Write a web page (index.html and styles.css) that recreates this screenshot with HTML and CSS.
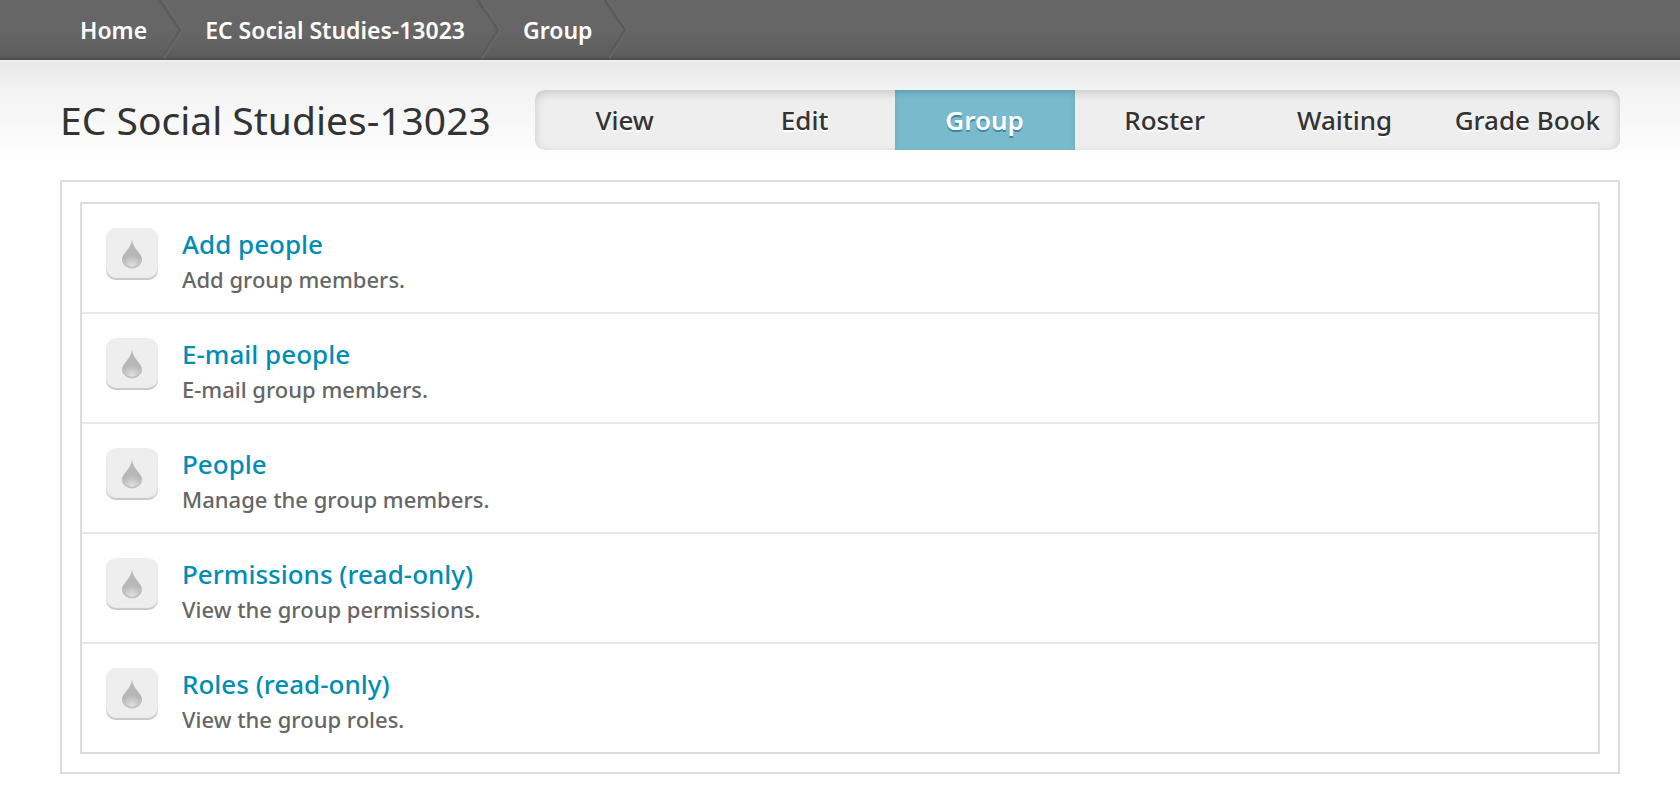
FILE: index.html
```html
<!DOCTYPE html>
<html lang="en">
<head>
<meta charset="utf-8">
<title>EC Social Studies-13023 | Group</title>
<link rel="stylesheet" href="styles.css">
</head>
<body>
<svg class="defs" width="0" height="0" aria-hidden="true">
  <defs>
    <radialGradient id="drop-fill" gradientUnits="userSpaceOnUse" cx="11" cy="27" r="12">
      <stop offset="0" stop-color="#e2e2e2"/>
      <stop offset="0.4" stop-color="#d0d0d0"/>
      <stop offset="0.9" stop-color="#b7b7b7"/>
    </radialGradient>
    <symbol id="drop" viewBox="0 0 22 30">
      <path d="M11 0.500C10.500 5 8.500 8 5.500 12C3 15.300 1 17.500 1 20.500A10 9 0 0 0 21 20.500C21 17.500 19 15.300 16.500 12C13.500 8 11.500 5 11 0.500Z" fill="url(#drop-fill)"/>
      <path d="M1.800 19.500A9.200 9 0 0 0 20.200 19.500" fill="none" stroke="#c2c2c2" stroke-width="1.500"/>
    </symbol>
    <symbol id="chevron" viewBox="0 0 24 60">
      <path d="M3 0L23 30L5 58" fill="none" stroke="#6b6b6b" stroke-width="2"/>
      <path d="M0 -1L21 30L3 58" fill="none" stroke="#5b5b5b" stroke-width="2.500"/>
    </symbol>
  </defs>
</svg>

<nav class="breadcrumb" aria-label="Breadcrumb">
  <ol class="crumbs">
    <li class="crumb"><a href="#">Home</a><svg class="chevron" aria-hidden="true"><use href="#chevron"/></svg></li>
    <li class="crumb"><a href="#">EC Social Studies-13023</a><svg class="chevron" aria-hidden="true"><use href="#chevron"/></svg></li>
    <li class="crumb"><a href="#">Group</a><svg class="chevron" aria-hidden="true"><use href="#chevron"/></svg></li>
  </ol>
</nav>

<header class="page-header">
  <h1 class="page-title">EC Social Studies-13023</h1>
  <nav class="tabs" aria-label="Tabs">
    <a class="tab" href="#">View</a>
    <a class="tab" href="#">Edit</a>
    <a class="tab tab-active" href="#" aria-current="page">Group</a>
    <a class="tab" href="#">Roster</a>
    <a class="tab" href="#">Waiting</a>
    <a class="tab" href="#">Grade Book</a>
  </nav>
</header>

<main class="panel">
  <ul class="admin-list">
    <li class="item"><span class="icon"><svg class="drop" aria-hidden="true"><use href="#drop"/></svg></span><div><a class="item-link" href="#">Add people</a><p class="item-text">Add group members.</p></div></li>
    <li class="item"><span class="icon"><svg class="drop" aria-hidden="true"><use href="#drop"/></svg></span><div><a class="item-link" href="#">E-mail people</a><p class="item-text">E-mail group members.</p></div></li>
    <li class="item"><span class="icon"><svg class="drop" aria-hidden="true"><use href="#drop"/></svg></span><div><a class="item-link" href="#">People</a><p class="item-text">Manage the group members.</p></div></li>
    <li class="item"><span class="icon"><svg class="drop" aria-hidden="true"><use href="#drop"/></svg></span><div><a class="item-link" href="#">Permissions (read-only)</a><p class="item-text">View the group permissions.</p></div></li>
    <li class="item"><span class="icon"><svg class="drop" aria-hidden="true"><use href="#drop"/></svg></span><div><a class="item-link" href="#">Roles (read-only)</a><p class="item-text">View the group roles.</p></div></li>
  </ul>
</main>
</body>
</html>
```
FILE: styles.css
```css
* {
  box-sizing: border-box;
}

body {
  margin: 0;
  background: #fff;
  color: #333;
  font-family: "Lucida Grande", "Noto Sans", "Open Sans", sans-serif;
}

a {
  color: inherit;
  text-decoration: none;
}

.defs {
  position: absolute;
}

.breadcrumb {
  padding: 0 80px;
  background: linear-gradient(#666 0, #666 50%, #5e5e5e 93%, #4c4c4c 100%);
}

.crumbs {
  display: flex;
  gap: 22px;
  margin: 0;
  padding: 0;
  list-style: none;
}

.crumb {
  display: flex;
  align-items: center;
  gap: 12px;
  height: 60px;
  color: #fff;
  font-size: 23px;
  font-weight: 600;
  white-space: nowrap;
}

.chevron {
  width: 24px;
  height: 60px;
}

.page-header {
  display: flex;
  align-items: center;
  justify-content: space-between;
  gap: 24px;
  padding: 30px 60px;
  background: linear-gradient(#f2f2f2 0, #e8e8e8 3px, #f2f2f2 26px, #fff 104px);
}

.page-title {
  margin: 0;
  font-size: 39px;
  font-weight: 400;
  line-height: 60px;
  white-space: nowrap;
}

.tabs {
  display: flex;
  border-radius: 10px;
  background: #eee;
  box-shadow: inset 0 3px 10px rgba(0, 0, 0, 0.16);
}

.tab {
  min-width: 180px;
  padding: 0 20px;
  font-size: 26px;
  font-weight: 500;
  line-height: 60px;
  text-align: center;
  text-shadow: 0 2px 0 #fff;
  white-space: nowrap;
}

.tab-active {
  background: #79bacd;
  box-shadow: inset 0 4px 8px -4px rgba(0, 60, 80, 0.4);
  color: #fff;
  font-weight: 600;
  text-shadow: 0 2px 0 #3a87a8;
}

.panel {
  margin: 0 60px 20px;
  padding: 20px 18px 18px;
  border: 2px solid #dcdcdc;
}

.admin-list {
  margin: 0;
  padding: 0;
  border: 2px solid #dcdcdc;
  list-style: none;
}

.item {
  display: flex;
  gap: 24px;
  padding: 24px 24px 20px;
}

.item + .item {
  border-top: 2px solid #e8e8e8;
}

.icon {
  display: flex;
  flex: none;
  align-items: center;
  justify-content: center;
  width: 52px;
  height: 52px;
  border-radius: 10px;
  background: #eee;
  box-shadow: inset 0 -2px 1px #c8c8c8;
}

.drop {
  width: 22px;
  height: 30px;
}

.item-link {
  display: block;
  color: #008db5;
  font-size: 26px;
  font-weight: 500;
  line-height: 32px;
}

.item-text {
  margin: 6px 0 0;
  color: #666;
  font-size: 22px;
  font-weight: 500;
  line-height: 26px;
}
```
